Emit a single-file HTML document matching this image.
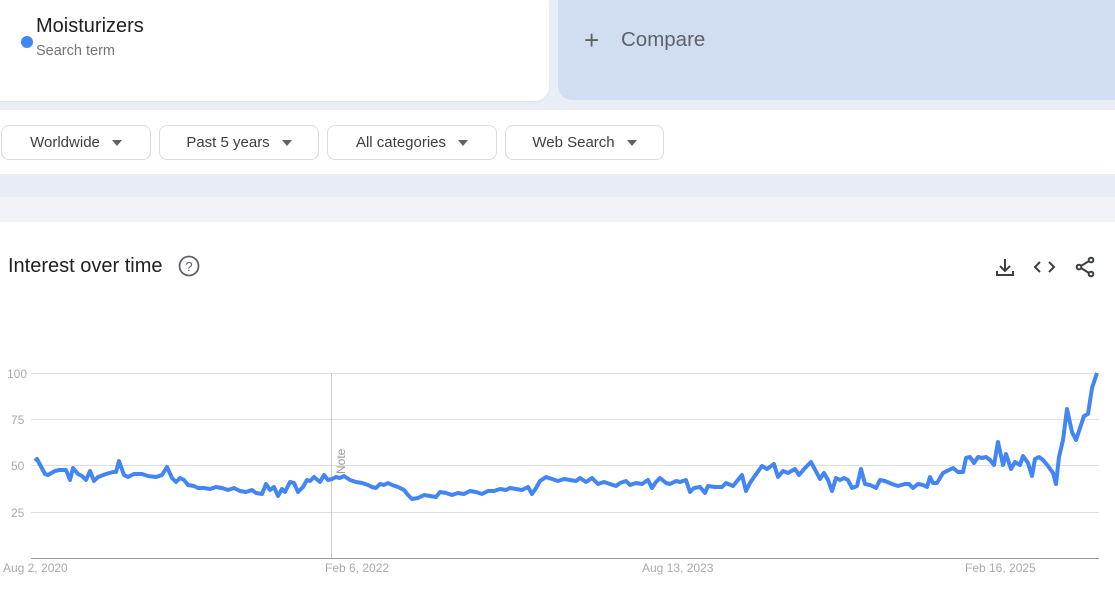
<!DOCTYPE html>
<html><head><meta charset="utf-8"><style>
*{margin:0;padding:0;box-sizing:border-box}
body{width:1115px;height:590px;overflow:hidden;background:#fff;font-family:"Liberation Sans",Arial,sans-serif;position:relative}
.abs{position:absolute}
.btn{position:absolute;top:125px;height:35px;border:1px solid #dadce0;border-radius:8px;background:#fff;font-size:15px;color:#3c4043;display:flex;align-items:center;justify-content:center;gap:12px}
.tri{width:0;height:0;border-left:5px solid transparent;border-right:5px solid transparent;border-top:6px solid #5f6368}
</style></head><body>
<div class="abs" style="left:0;top:0;width:1115px;height:110px;background:#e9edf6"></div>
<div class="abs" style="left:0;top:0;width:549px;height:101px;background:#fff;border-bottom-right-radius:14px;box-shadow:0 1px 1px #dde1e8"></div>
<div class="abs" style="left:21px;top:36px;width:12px;height:12px;border-radius:50%;background:#4285f4"></div>
<div class="abs" style="left:36px;top:15px;font-size:20px;color:#202124">Moisturizers</div>
<div class="abs" style="left:36px;top:43px;font-size:14.5px;color:#70757a">Search term</div>
<div class="abs" style="left:558px;top:0;width:557px;height:100px;background:#d1def2;border-bottom-left-radius:14px"></div>
<div class="abs" style="left:584px;top:25px;font-size:26px;color:#5f6368;font-weight:300">+</div>
<div class="abs" style="left:621px;top:28px;font-size:20.5px;color:#5f6368">Compare</div>
<div class="abs" style="left:0;top:110px;width:1115px;height:64px;background:#fff"></div>
<div class="btn" style="left:1px;width:150px">Worldwide <span class="tri"></span></div>
<div class="btn" style="left:159px;width:160px">Past 5 years <span class="tri"></span></div>
<div class="btn" style="left:327px;width:170px">All categories <span class="tri"></span></div>
<div class="btn" style="left:505px;width:159px">Web Search <span class="tri"></span></div>
<div class="abs" style="left:0;top:174px;width:1115px;height:23px;background:#e8ecf5"></div>
<div class="abs" style="left:0;top:197px;width:1115px;height:25px;background:#f1f3f9"></div>
<div class="abs" style="left:8px;top:255px;font-size:20px;color:#202124">Interest over time</div>
<svg class="abs" style="left:178px;top:255px" width="22" height="22" viewBox="0 0 22 22"><circle cx="11" cy="11" r="9.5" fill="none" stroke="#5f6368" stroke-width="1.8"/><text x="11" y="16" text-anchor="middle" font-size="13" font-family="Liberation Sans" fill="#5f6368">?</text></svg>
<svg class="abs" style="left:994px;top:255px" width="110" height="24" viewBox="0 0 110 24" fill="none" stroke="#3c4043" stroke-width="2">
<path d="M11 4v12M6 11l5 5 5-5M3 16v4h16v-4"/>
<path d="M46 7l-5 5 5 5M55 7l5 5-5 5"/>
<circle cx="97" cy="5" r="2.3"/><circle cx="97" cy="19" r="2.3"/><circle cx="85" cy="12" r="2.3"/><path d="M87 11l8-5M87 13l8 5"/>
</svg>
<svg class="abs" style="left:0;top:0" width="1115" height="590">
<g stroke="#e0e0e0" stroke-width="1"><line x1="31" y1="373.5" x2="1099" y2="373.5"/><line x1="31" y1="419.5" x2="1099" y2="419.5"/><line x1="31" y1="465.5" x2="1099" y2="465.5"/><line x1="31" y1="512.5" x2="1099" y2="512.5"/></g>
<line x1="331.5" y1="373" x2="331.5" y2="558" stroke="#ccc"/>
<line x1="31" y1="558.5" x2="1099" y2="558.5" stroke="#999"/>
<g font-size="12" fill="#aaa" font-family="Liberation Sans"><text x="7" y="378">100</text><text x="11" y="424">75</text><text x="11" y="470">50</text><text x="11" y="517">25</text>
<text x="3" y="572">Aug 2, 2020</text><text x="325" y="572">Feb 6, 2022</text><text x="642" y="572">Aug 13, 2023</text><text x="965" y="572">Feb 16, 2025</text>
<text transform="translate(345,474) rotate(-90)" fill="#999">Note</text></g>
<polyline fill="none" stroke="#4285f4" stroke-width="4" stroke-linejoin="round" points="35,461 37,459 45,474 48,475 55,471 59,470 62,470 66,470 70,480 73,468 78,474 82,476 86,480 90,471 94,481 98,477 106,474 113,472 116,472 119,461 124,475 128,477 134,474 142,474 148,476 156,477 162,475 167,467 172,478 176,482 180,478 184,480 188,485 194,486 198,488 204,488 210,489 216,487 222,488 228,490 234,488 240,491 246,492 252,490 256,493 262,494 266,484 270,490 274,487 278,496 282,489 285,492 290,482 294,483 298,492 303,487 307,480 310,481 314,477 320,482 324,475 328,480 332,479 336,477 340,478 344,476 350,480 356,482 362,483 368,485 372,487 376,488 380,484 384,485 388,483 392,485 398,487 404,490 408,495 412,499 418,498 424,495 430,496 436,497 440,492 446,493 452,495 458,493 464,494 470,491 476,492 482,494 488,491 494,491 500,489 506,490 510,488 516,489 522,490 528,487 532,494 536,488 540,481 546,477 552,479 558,481 564,479 570,480 576,481 580,478 586,482 592,478 598,484 604,482 610,484 616,486 620,483 626,481 630,485 636,483 642,484 648,480 652,488 656,482 660,478 666,483 670,484 676,481 680,482 686,480 690,492 694,488 700,487 705,493 708,486 715,487 722,487 726,483 733,486 742,475 746,491 750,483 754,477 762,466 767,469 774,464 778,477 783,471 788,473 795,469 799,475 805,468 811,462 820,479 824,473 828,480 832,491 836,478 840,480 844,478 848,480 852,488 857,486 861,469 865,484 870,485 876,488 880,480 885,481 892,484 898,486 905,484 909,484 913,488 918,484 923,485 927,487 930,477 933,483 937,483 943,473 947,471 953,468 958,472 963,472 966,458 970,457 974,463 978,457 982,458 986,457 990,460 994,465 998,442 1003,465 1006,454 1011,469 1015,462 1020,465 1023,456 1028,463 1032,476 1035,459 1039,457 1043,460 1048,466 1053,473 1056,484 1059,457 1063,440 1067,409 1072,432 1076,440 1080,428 1084,416 1088,414 1092,388 1097,373"/>
</svg>
</body></html>
